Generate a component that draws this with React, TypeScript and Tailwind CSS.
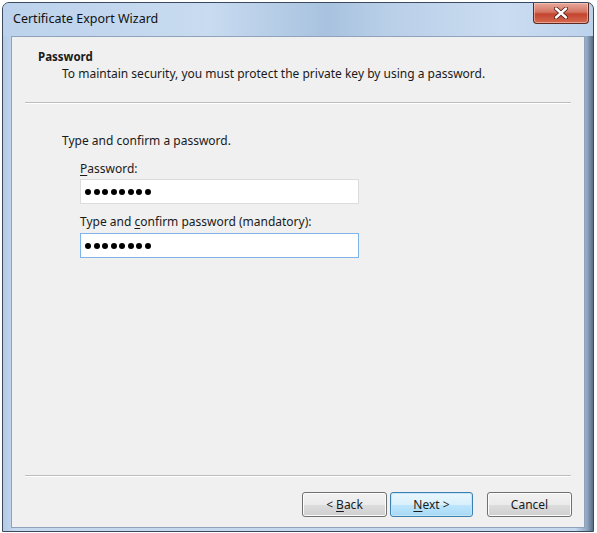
const font = { fontFamily: '"Noto Sans", "Open Sans", sans-serif' };

function Dots() {
  return (
    <div className="flex items-center gap-[2.5px] pl-[4px]">
      {Array.from({ length: 8 }).map((_, i) => (
        <div key={i} className="h-[6px] w-[6px] rounded-full bg-black" />
      ))}
    </div>
  );
}

function WizardButton({ children, primary }: { children: React.ReactNode; primary?: boolean }) {
  return (
    <button
      type="button"
      className={
        primary
          ? 'flex h-[25px] w-[83px] items-center justify-center rounded-[3px] border border-[#3c7fb1] bg-[linear-gradient(180deg,#eaf6fd_0%,#d9f0fc_50%,#bee6fd_51%,#a7d9f5_100%)] text-[12px] text-[#1a1a1a] shadow-[inset_0_0_0_1px_#c4e5f6]'
          : 'flex h-[25px] w-[85px] items-center justify-center rounded-[3px] border border-[#707070] bg-[linear-gradient(180deg,#f2f2f2_0%,#ebebeb_50%,#dddddd_51%,#cfcfcf_100%)] text-[12px] text-[#1a1a1a] shadow-[inset_0_0_0_1px_#fcfcfc]'
      }
    >
      {children}
    </button>
  );
}

export default function App() {
  return (
    <div className="h-[533px] w-[597px] bg-white pl-[2px] pt-[2px]" style={font}>
      <div className="flex h-[530px] w-[592px] flex-col rounded-t-[7px] border border-[#3b4a5e] bg-[linear-gradient(90deg,#b3cbe6_0%,#c4d8ee_2%,#c4d8ee_97%,#8fa6c0_99%,#5a6d84_100%)]">
        <div className="flex h-[33px] items-start justify-between rounded-t-[6px] bg-[linear-gradient(90deg,#bcd2ec_0%,#c8dbf0_35%,#a8c2df_55%,#b9cfe8_65%,#cadcf1_85%,#bcd2ec_100%)] pl-[10px] pr-[4px]">
          <span className="pt-[8px] text-[12.5px] leading-[16px] text-[#111]">Certificate Export Wizard</span>
          <div className="flex h-[21px] w-[56px] items-center justify-center rounded-b-[4px] border border-t-0 border-[#5c2a22] bg-[linear-gradient(180deg,#e8a89b_0%,#d47563_45%,#c4452f_55%,#d56a4f_100%)] shadow-[inset_0_0_0_1px_rgba(255,220,210,0.5)]">
            <svg width="14" height="12" viewBox="0 0 14 12">
              <path d="M2 1.5 L12 10.5 M12 1.5 L2 10.5" stroke="#4a1a12" strokeWidth="4" strokeLinecap="round" />
              <path d="M2 1.5 L12 10.5 M12 1.5 L2 10.5" stroke="#ffffff" strokeWidth="2.4" strokeLinecap="round" />
            </svg>
          </div>
        </div>

        <div className="mx-[8px] mb-[3px] flex flex-1 flex-col border border-[#8ea3bb] bg-[#f0f0f0] text-[12px] leading-[16px] text-[#1a1a1a]">
          <div className="pl-[26px] pt-[12px] text-[11.5px] font-bold">Password</div>
          <div className="mt-[1px] pl-[50px]">
            To maintain security, you must protect the private key by using a password.
          </div>
          <div className="mx-[13px] mt-[20px] h-[2px] border-b border-t border-b-white border-t-[#bdbdbd]" />

          <div className="mt-[29px] pl-[50px]">Type and confirm a password.</div>
          <div className="mt-[12px] pl-[68px]">
            <span className="underline underline-offset-2">P</span>assword:
          </div>
          <div className="ml-[68px] mt-[2px] flex h-[25px] w-[279px] items-center border border-[#dcdcdc] bg-white">
            <Dots />
          </div>
          <div className="mt-[10px] pl-[68px]">
            Type and <span className="underline underline-offset-2">c</span>onfirm password (mandatory):
          </div>
          <div className="ml-[68px] mt-[3px] flex h-[25px] w-[279px] items-center border border-[#7eb4ea] bg-white">
            <Dots />
          </div>

          <div className="mt-auto">
            <div className="mx-[13px] h-[2px] border-b border-t border-b-white border-t-[#bdbdbd]" />
            <div className="flex justify-end pb-[10px] pr-[12px] pt-[15px]">
              <WizardButton>
                &lt; <span className="ml-[3px] underline underline-offset-2">B</span>ack
              </WizardButton>
              <div className="ml-[3px]">
                <WizardButton primary>
                  <span className="underline underline-offset-2">N</span>ext &gt;
                </WizardButton>
              </div>
              <div className="ml-[14px]">
                <WizardButton>Cancel</WizardButton>
              </div>
            </div>
          </div>
        </div>
      </div>
    </div>
  );
}
